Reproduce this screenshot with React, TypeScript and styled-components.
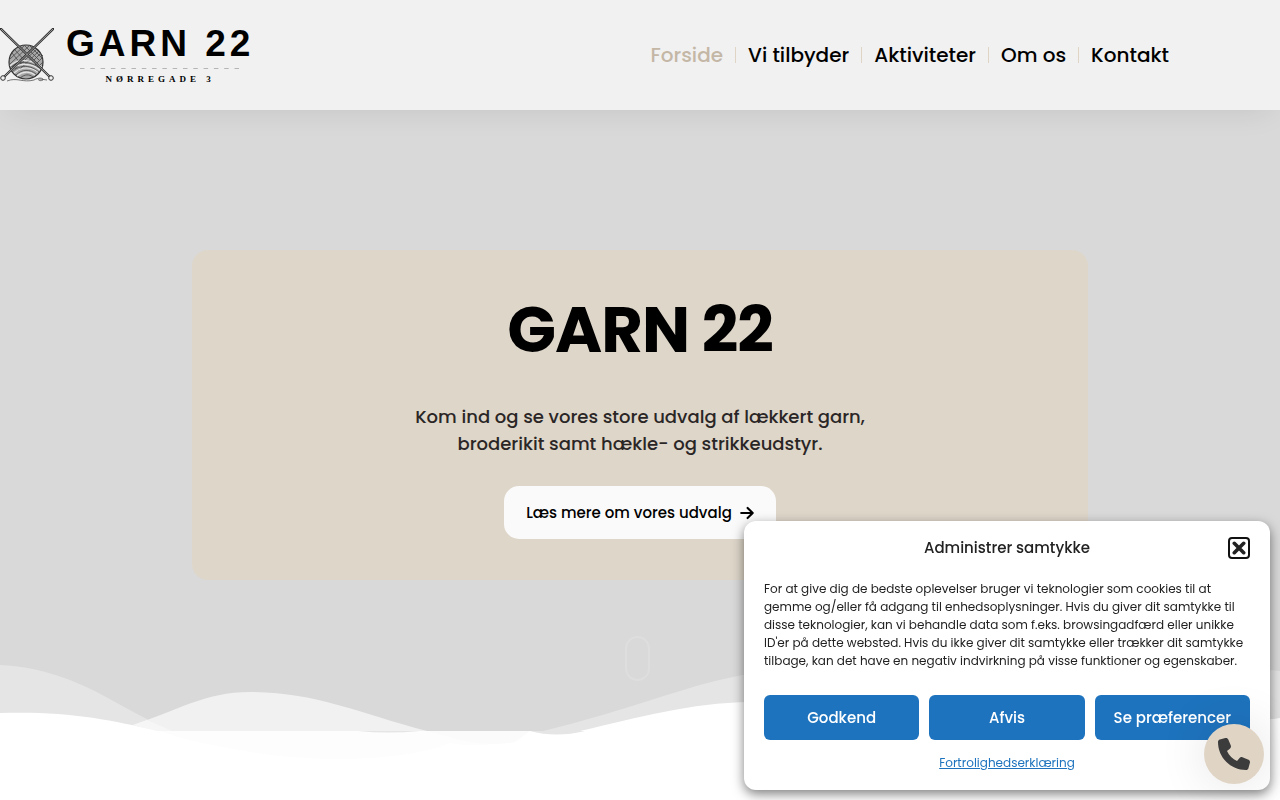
import React from "react";
import styled, { createGlobalStyle } from "styled-components";

const GlobalStyle = createGlobalStyle`
  *, *::before, *::after { box-sizing: border-box; }
  body {
    margin: 0;
    background: #fff;
    color: #222;
    font-family: "Poppins", "Inter", sans-serif;
    overflow-x: hidden;
  }
  p, h1, h2, ul { margin: 0; padding: 0; }
  button, a { font-family: inherit; }
`;

const Header = styled.header`
  position: relative;
  z-index: 2;
  display: flex;
  align-items: center;
  justify-content: space-between;
  height: 110px;
  padding-right: 99px;
  background: #f1f1f1;
  box-shadow: 0 10px 30px -10px rgba(0, 0, 0, 0.1);
`;

const Logo = styled.a`
  display: flex;
  align-items: center;
  gap: 12px;
  color: #000;
  text-decoration: none;
`;

const LogoWords = styled.span`
  display: flex;
  flex-direction: column;
  align-items: center;
  padding-top: 2px;
`;

const LogoName = styled.span`
  font: 700 37px/32px "Liberation Sans", Arial, sans-serif;
  letter-spacing: 4px;
`;

const LogoRule = styled.svg`
  display: block;
  margin: 8px 0 4px;
`;

const LogoStreet = styled.span`
  font: 700 9px/10px "Liberation Serif", serif;
  letter-spacing: 4px;
`;

const NavList = styled.ul`
  display: flex;
  align-items: center;
  list-style: none;
`;

const NavItem = styled.li`
  display: flex;
  align-items: center;
  height: 16px;
  padding: 0 12px;
  & + & { border-left: 1px solid #e0d4c5; }
`;

const NavLink = styled.a<{ $active?: boolean }>`
  color: ${(p) => (p.$active ? "#c4b7a6" : "#000")};
  font-size: 20px;
  font-weight: 500;
  line-height: 20px;
  text-decoration: none;
`;

const Hero = styled.section`
  position: relative;
  display: flex;
  flex-direction: column;
  align-items: center;
  height: 621px;
  padding-top: 140px;
  background: #d9d9d9;
`;

const HeroCard = styled.div`
  display: flex;
  flex-direction: column;
  align-items: center;
  width: 70%;
  height: 330px;
  padding-top: 48px;
  border-radius: 16px;
  background: #ded6c9;
  text-align: center;
`;

const HeroTitle = styled.h1`
  color: #000;
  font-size: 64px;
  font-weight: 700;
  line-height: 64px;
  letter-spacing: -1px;
`;

const HeroText = styled.p`
  max-width: 500px;
  margin: 41px 0 29px;
  color: #2b2626;
  font-size: 18px;
  font-weight: 500;
  line-height: 27px;
`;

const HeroButton = styled.a`
  display: inline-flex;
  align-items: center;
  gap: 8px;
  height: 53px;
  padding: 0 22px;
  border-radius: 15px;
  background: #fafafa;
  color: #000;
  font-size: 15px;
  font-weight: 500;
  text-decoration: none;
`;

const ScrollHint = styled.span`
  width: 25px;
  height: 45px;
  margin: 56px 5px 0 0;
  border: 2px solid #dedede;
  border-radius: 13px;
`;

const Waves = styled.svg`
  position: absolute;
  left: 0;
  bottom: -39px;
  width: 100%;
  height: 110px;
`;

const Below = styled.section`
  height: 69px;
  background: #fff;
`;

const Consent = styled.section`
  position: fixed;
  right: 10px;
  bottom: 10px;
  z-index: 5;
  display: flex;
  flex-direction: column;
  width: 526px;
  max-width: calc(100% - 20px);
  padding: 16px 20px 18px;
  border-radius: 12px;
  background: #fff;
  box-shadow: 0 4px 12px rgba(0, 0, 0, 0.5);
`;

const ConsentHead = styled.div`
  display: grid;
  grid-template-columns: 22px 1fr 22px;
  align-items: center;
`;

const ConsentTitle = styled.h2`
  grid-column: 2;
  font-size: 15px;
  font-weight: 500;
  line-height: 22px;
  text-align: center;
`;

const CloseButton = styled.button`
  display: grid;
  place-items: center;
  width: 22px;
  height: 22px;
  padding: 0;
  border: 2px solid #111;
  border-radius: 4px;
  background: #fff;
  color: #222;
`;

const ConsentText = styled.p`
  margin: 21px 0 25px;
  font-size: 12px;
  line-height: 18px;
`;

const ConsentActions = styled.div`
  display: grid;
  grid-template-columns: repeat(3, 1fr);
  gap: 10px;
`;

const ActionButton = styled.button`
  height: 45px;
  padding: 0;
  border: 0;
  border-radius: 6px;
  background: #1e73be;
  color: #fff;
  font-size: 15px;
  font-weight: 500;
`;

const PolicyLink = styled.a`
  align-self: center;
  margin-top: 14px;
  color: #1e73be;
  font-size: 12px;
  line-height: 18px;
`;

const PhoneButton = styled.a`
  position: fixed;
  right: 16px;
  bottom: 16px;
  z-index: 6;
  display: grid;
  place-items: center;
  width: 60px;
  height: 60px;
  border-radius: 50%;
  background: #e0d4c5;
  box-shadow: 0 0 50px rgba(0, 0, 0, 0.12);
  color: #3c3c3c;
`;

const pages = ["Forside", "Vi tilbyder", "Aktiviteter", "Om os", "Kontakt"];

const YarnMark = () => (
  <svg width="54" height="54" viewBox="0 0 54 54" fill="none" aria-hidden="true">
    <circle cx="26" cy="34" r="17" fill="#a8a8a8" stroke="#333" strokeWidth="1.2" />
    <g stroke="#484848" strokeWidth="0.8">
      <path d="M10 31 25 17M10 36 30 17M12 39 34 19M15 41 37 21M18 43 39 23M12 25 21 36M15 22 25 33M19 19 31 30M24 17 39 32M29 17 42 30M34 19 43 28" />
      <path d="M32 34 41 25M35 37 43 29M37 40 43 34" />
    </g>
    <path d="M10 38C18 30 31 31 42 39M11 42C19 34 32 35 40 42M14 45C22 38 31 39 38 44M17 48C23 43 30 43 35 47" stroke="#e4e4e4" strokeWidth="1.2" />
    <path d="M10 40C18 32 31 33 41 41M12 44C20 36 31 37 39 44M16 47C22 41 30 41 36 46M20 50C25 46 29 46 33 49" stroke="#444" strokeWidth="0.8" />
    <path d="M0 0 50 49M54 0 4 49" stroke="#333" strokeWidth="2.4" />
    <path d="M1 1 50 49M53 1 4 49" stroke="#b8b8b8" strokeWidth="0.8" />
    <circle cx="3" cy="50" r="2.3" fill="#f1f1f1" stroke="#333" />
    <circle cx="51" cy="50" r="2.3" fill="#f1f1f1" stroke="#333" />
    <path d="M7 53C17 49 23 55 34 52C39 49 44 50 43 52C40 54 36 51 40 51L47 52" stroke="#555" strokeWidth="0.8" />
  </svg>
);

const App = () => (
  <>
    <GlobalStyle />
    <Header>
      <Logo href="#" aria-label="Garn 22, Nørregade 3">
        <YarnMark />
        <LogoWords>
          <LogoName>GARN 22</LogoName>
          <LogoRule width="160" height="2" viewBox="0 0 160 2" aria-hidden="true">
            <path d="M0 0.5H160" stroke="#b5b5b5" strokeDasharray="4.500 5.800" />
          </LogoRule>
          <LogoStreet>NØRREGADE 3</LogoStreet>
        </LogoWords>
      </Logo>
      <nav>
        <NavList>
          {pages.map((page, i) => (
            <NavItem key={page}>
              <NavLink href="#" $active={i === 0}>{page}</NavLink>
            </NavItem>
          ))}
        </NavList>
      </nav>
    </Header>
    <main>
      <Hero>
        <HeroCard>
          <HeroTitle>GARN 22</HeroTitle>
          <HeroText>
            Kom ind og se vores store udvalg af lækkert garn,
            <br />
            broderikit samt hækle- og strikkeudstyr.
          </HeroText>
          <HeroButton href="#">
            Læs mere om vores udvalg
            <svg width="14" height="14" viewBox="0 0 14 14" fill="none" stroke="currentColor" strokeWidth="2.1" strokeLinecap="round" strokeLinejoin="round" aria-hidden="true">
              <path d="M1.2 7H12.4M7.6 1.9 12.7 7 7.6 12.1" />
            </svg>
          </HeroButton>
        </HeroCard>
        <ScrollHint />
        <Waves viewBox="0 660 1280 110" preserveAspectRatio="none" aria-hidden="true">
          <path d="M0 731H1280V770H0Z" fill="#fff" />
          <path d="M160 731H530L500 742Q480 748 450 743C410 760 320 765 240 750Q190 742 160 731Z" fill="#fdfdfd" />
          <path d="M427 731H530L515 742Q490 747 460 740Z" fill="#fbfbfb" />
          <path d="M0 665C42 667 77 681 106 697C128 709 149 721 172 731H0Z" fill="#e5e5e5" />
          <path d="M543 731C630 710 690 684 743 675C880 642 1080 652 1280 671V731Z" fill="#e5e5e5" />
          <path d="M133 725C176 711 205 692 250 692C315 692 358 713 427 731H150Z" fill="#f1f1f1" />
          <path d="M147 720 133 725 157 731H172Z" fill="#f6f6f6" />
          <path d="M358 731H420Q388 734 358 731Z" fill="#e5e5e5" />
          <path d="M530 731H585Q556 738 530 731Z" fill="#e5e5e5" />
          <path d="M0 713C65 711 109 719 157 731H0Z" fill="#fff" />
          <path d="M580 731C640 717 690 703 750 702C950 692 1130 740 1280 718V731Z" fill="#fff" />
        </Waves>
      </Hero>
      <Below />
    </main>
    <Consent role="dialog" aria-labelledby="consent-title">
      <ConsentHead>
        <ConsentTitle id="consent-title">Administrer samtykke</ConsentTitle>
        <CloseButton aria-label="Luk">
          <svg width="14" height="14" viewBox="0 0 14 14" stroke="currentColor" strokeWidth="3.6" strokeLinecap="round" aria-hidden="true">
            <path d="M2.3 2.3 11.7 11.7M11.7 2.3 2.3 11.7" />
          </svg>
        </CloseButton>
      </ConsentHead>
      <ConsentText>
        For at give dig de bedste oplevelser bruger vi teknologier som cookies til at
        gemme og/eller få adgang til enhedsoplysninger. Hvis du giver dit samtykke til
        disse teknologier, kan vi behandle data som f.eks. browsingadfærd eller unikke
        ID'er på dette websted. Hvis du ikke giver dit samtykke eller trækker dit samtykke
        tilbage, kan det have en negativ indvirkning på visse funktioner og egenskaber.
      </ConsentText>
      <ConsentActions>
        <ActionButton>Godkend</ActionButton>
        <ActionButton>Afvis</ActionButton>
        <ActionButton>Se præferencer</ActionButton>
      </ConsentActions>
      <PolicyLink href="#">Fortrolighedserklæring</PolicyLink>
    </Consent>
    <PhoneButton href="#" aria-label="Ring til os">
      <svg width="32" height="32" viewBox="0 0 512 512" fill="currentColor" aria-hidden="true">
        <path d="M164.9 24.6c-7.7-18.6-28-28.5-47.4-23.2l-88 24C12.100 30.200 0 46 0 64c0 247.400 200.600 448 448 448 18 0 33.800-12.100 38.600-29.500l24-88c5.300-19.400-4.600-39.700-23.200-47.400l-96-40c-16.300-6.800-35.200-2.100-46.300 11.600L304.700 368C234.300 334.700 177.300 277.700 144 207.300l49.300-40.300c13.700-11.200 18.400-30 11.600-46.300l-40-96z" />
      </svg>
    </PhoneButton>
  </>
);

export default App;
